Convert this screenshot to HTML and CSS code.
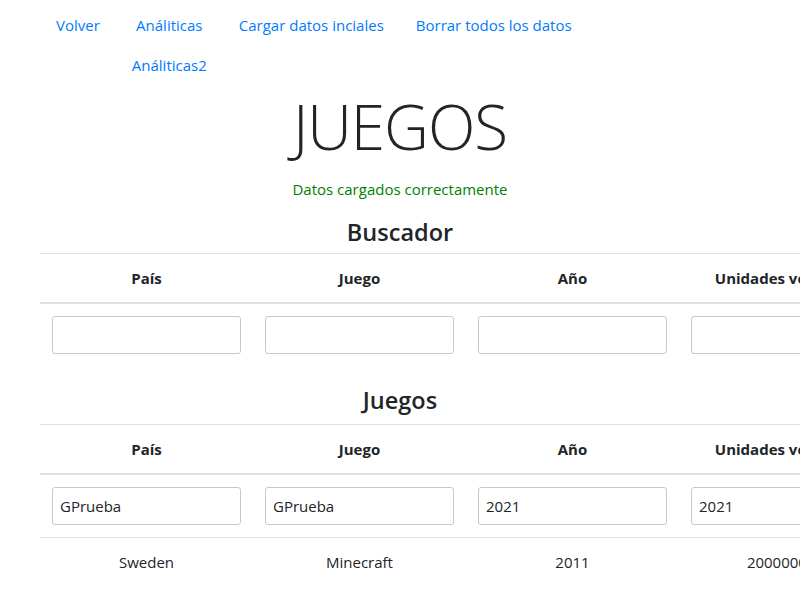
FILE: index.html
```html
<!DOCTYPE html>
<html lang="es">
<head>
<meta charset="utf-8">
<title>Juegos</title>
<link rel="stylesheet" href="styles.css">
</head>
<body>
<div class="container">
  <nav class="nav">
    <a class="nav-link" href="#">Volver</a>
    <a class="nav-link" href="#">Análiticas</a>
    <a class="nav-link" href="#">Cargar datos inciales</a>
    <a class="nav-link" href="#">Borrar todos los datos</a>
    <span></span>
    <a class="nav-link" href="#">Análiticas2</a>
  </nav>
  <h1 class="display">JUEGOS</h1>
  <div class="msg">Datos cargados correctamente</div>
  <h3 class="section">Buscador</h3>
  <table class="table">
    <thead>
      <tr><th>País</th><th>Juego</th><th>Año</th><th>Unidades vendidas</th></tr>
    </thead>
    <tbody>
      <tr>
        <td><input class="field" type="text"></td>
        <td><input class="field" type="text"></td>
        <td><input class="field" type="text"></td>
        <td><input class="field" type="text"></td>
      </tr>
    </tbody>
  </table>
  <h3 class="section section-list">Juegos</h3>
  <table class="table">
    <thead>
      <tr><th>País</th><th>Juego</th><th>Año</th><th>Unidades vendidas</th></tr>
    </thead>
    <tbody>
      <tr>
        <td><input class="field" type="text" value="GPrueba"></td>
        <td><input class="field" type="text" value="GPrueba"></td>
        <td><input class="field" type="text" value="2021"></td>
        <td><input class="field" type="text" value="2021"></td>
      </tr>
      <tr>
        <td>Sweden</td><td>Minecraft</td><td>2011</td><td>200000000</td>
      </tr>
    </tbody>
  </table>
</div>
</body>
</html>
```
FILE: styles.css
```css
html, body {
  margin: 0;
  padding: 0;
  overflow: hidden;
  background: #fff;
}
body {
  font-family: "Open Sans", "Noto Sans", sans-serif;
  font-size: 15px;
  line-height: 24px;
  color: #212529;
}
.container {
  width: 720px;
  margin: 0 auto;
  padding-top: 5px;
}
.nav {
  display: grid;
  grid-template-columns: repeat(4, auto);
  justify-content: start;
  text-align: center;
}
.nav-link {
  display: block;
  padding: 8px 16px;
  color: #007bff;
  text-decoration: none;
  white-space: nowrap;
}
.display {
  margin: 0;
  font-size: 62px;
  font-weight: 300;
  line-height: 82px;
  text-align: center;
  letter-spacing: -1px;
}
.msg {
  margin-top: 10px;
  color: #008000;
  text-align: center;
}
.section {
  margin: 0;
  padding: 15px 0 5px;
  font-size: 23.5px;
  font-weight: 600;
  line-height: 32px;
  text-align: center;
}
.section-list {
  padding: 12px 0 8px;
}
.table {
  border-collapse: collapse;
  table-layout: fixed;
  width: 852px;
  margin-bottom: 6px;
}
.table th,
.table td {
  width: 189px;
  padding: 12px;
  text-align: center;
  border-top: 1px solid #dee2e6;
  vertical-align: top;
  white-space: nowrap;
}
.table thead th {
  border-bottom: 2px solid #dee2e6;
  font-weight: 700;
}
.field {
  display: block;
  box-sizing: border-box;
  width: 100%;
  height: 38px;
  margin: 0;
  padding: 0 7px;
  font: inherit;
  color: #212529;
  border: 1px solid #c8c8c8;
  border-radius: 3px;
  background: #fff;
}
```
